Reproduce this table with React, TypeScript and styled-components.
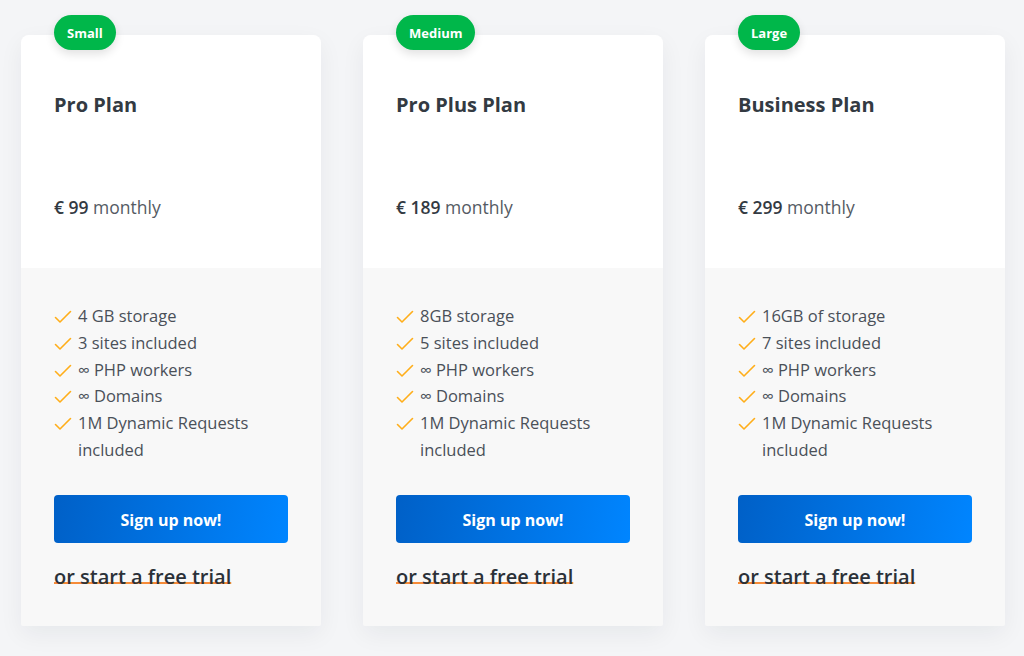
import React from 'react'
import styled, { createGlobalStyle } from 'styled-components'

const GlobalStyle = createGlobalStyle`
  html, body {
    margin: 0;
    background: #f4f5f7;
    font-family: 'Open Sans', 'Noto Sans', sans-serif;
    color: #333a42;
  }
`

const Plans = styled.main`
  display: flex;
  gap: 42px;
  padding: 35px 21px 30px;
`

const Card = styled.section`
  position: relative;
  width: 300px;
  display: flex;
  flex-direction: column;
  border-radius: 8px 8px 2px 2px;
  background: #f8f8f8;
  box-shadow: 0 8px 24px rgba(20, 30, 50, 0.06);
`

const Badge = styled.span`
  position: absolute;
  top: -20px;
  left: 33px;
  height: 35px;
  padding: 0 13px;
  display: flex;
  align-items: center;
  border-radius: 18px;
  background: #00b74a;
  color: #fff;
  font-size: 13px;
  font-weight: 700;
  box-shadow: 0 4px 10px rgba(0, 0, 0, 0.12);
`

const Head = styled.header`
  height: 233px;
  box-sizing: border-box;
  padding: 57px 33px 0;
  background: #fff;
  border-radius: 8px 8px 0 0;
`

const Title = styled.h2`
  margin: 0;
  font-size: 20px;
  line-height: 26px;
  font-weight: 700;
  color: #333a42;
`

const Price = styled.p`
  margin: 76px 0 0;
  font-size: 17.5px;
  line-height: 26px;
  color: #545b63;

  strong {
    font-weight: 600;
    color: #333a42;
  }
`

const Body = styled.div`
  padding: 35px 33px 36px;
`

const Features = styled.ul`
  list-style: none;
  margin: 0;
  padding: 0;
`

const Feature = styled.li`
  display: flex;
  gap: 6px;
  font-size: 16.5px;
  line-height: 26.8px;
  color: #4a5058;

  svg {
    flex: none;
    margin-top: 7px;
  }
`

const SignUp = styled.button`
  display: block;
  width: 234px;
  height: 48px;
  margin-top: 31px;
  border: 0;
  border-radius: 4px;
  background: linear-gradient(100deg, #0060c7 0%, #0085ff 100%);
  color: #fff;
  font-family: inherit;
  font-size: 16px;
  font-weight: 700;
  line-height: 1;
  padding-top: 3px;
  cursor: pointer;
`

const Trial = styled.a`
  display: inline-block;
  margin-top: 21px;
  font-size: 20px;
  line-height: 26px;
  font-weight: 600;
  color: #2b3138;
  text-decoration: underline;
  text-decoration-color: #f68b38;
  text-decoration-thickness: 2px;
  text-decoration-skip-ink: none;
  text-underline-offset: -2px;
  cursor: pointer;
`

const Check = () => (
  <svg width="18" height="14" viewBox="0 0 18 14" fill="none">
    <path d="M1.5 7.5 L6 12 L16.5 1.5" stroke="#ffae1a" strokeWidth="1.6" strokeLinecap="round" strokeLinejoin="round" />
  </svg>
)

interface Plan {
  size: string
  name: string
  price: string
  features: string[]
}

const plans: Plan[] = [
  {
    size: 'Small',
    name: 'Pro Plan',
    price: '€ 99',
    features: ['4 GB storage', '3 sites included', '∞ PHP workers', '∞ Domains', '1M Dynamic Requests included'],
  },
  {
    size: 'Medium',
    name: 'Pro Plus Plan',
    price: '€ 189',
    features: ['8GB storage', '5 sites included', '∞ PHP workers', '∞ Domains', '1M Dynamic Requests included'],
  },
  {
    size: 'Large',
    name: 'Business Plan',
    price: '€ 299',
    features: ['16GB of storage', '7 sites included', '∞ PHP workers', '∞ Domains', '1M Dynamic Requests included'],
  },
]

const App: React.FC = () => (
  <>
    <GlobalStyle />
    <Plans>
      {plans.map((plan) => (
        <Card key={plan.name}>
          <Badge>{plan.size}</Badge>
          <Head>
            <Title>{plan.name}</Title>
            <Price>
              <strong>{plan.price}</strong> monthly
            </Price>
          </Head>
          <Body>
            <Features>
              {plan.features.map((f) => (
                <Feature key={f}>
                  <Check />
                  <span>{f}</span>
                </Feature>
              ))}
            </Features>
            <SignUp>Sign up now!</SignUp>
            <Trial>or start a free trial</Trial>
          </Body>
        </Card>
      ))}
    </Plans>
  </>
)

export default App
